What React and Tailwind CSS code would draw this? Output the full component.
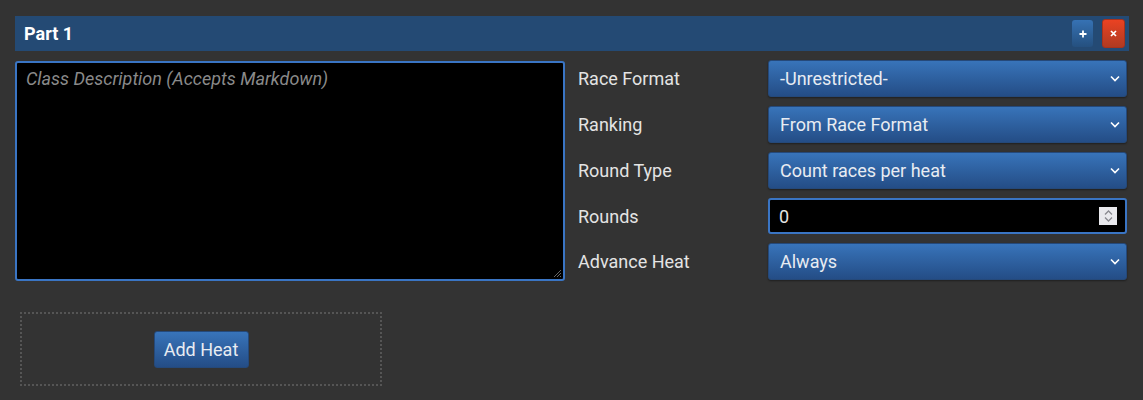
import React from 'react';

const font = { fontFamily: 'Roboto, "Liberation Sans", sans-serif' };

const Chevron = () => (
  <svg width="10" height="7" viewBox="0 0 10 7" className="shrink-0">
    <path d="M1 1.5 L5 5.5 L9 1.5" fill="none" stroke="#ffffff" strokeWidth="1.6" />
  </svg>
);

const SelectBox = ({ value }) => (
  <div className="w-[359px] h-[37px] rounded-[3px] border border-[#25497a] bg-gradient-to-b from-[#3874ba] to-[#244d86] flex items-center justify-between pl-[11px] pr-[6px] text-[18px] text-[#e8ecf2] shadow-[0_1px_2px_rgba(0,0,0,0.4)]">
    <span>{value}</span>
    <Chevron />
  </div>
);

const Row = ({ label, children }) => (
  <div className="flex items-center">
    <div className="w-[190px] text-[18px] text-[#e4e4e4]">{label}</div>
    {children}
  </div>
);

export default function App() {
  return (
    <div className="min-h-[400px] bg-[#333333] pt-4 pl-[15px] pr-[14px]" style={font}>
      {/* ヘッダー */}
      <div className="h-[35px] bg-[#244a74] flex items-center justify-between pl-[9px] pr-[4px]">
        <span className="text-white font-bold text-[18px]">Part 1</span>
        <div className="flex items-center gap-[9px]">
          <button className="w-[21px] h-[27px] rounded-[3px] bg-gradient-to-b from-[#3672b4] to-[#25507f] flex items-center justify-center">
            <svg width="8" height="8" viewBox="0 0 8 8">
              <path d="M4 0.5 V7.5 M0.5 4 H7.5" stroke="#fff" strokeWidth="1.8" />
            </svg>
          </button>
          <button className="w-[23px] h-[29px] rounded-[3px] border border-[#a8321c] bg-gradient-to-b from-[#ea4222] to-[#b03a22] flex items-center justify-center">
            <svg width="7" height="7" viewBox="0 0 7 7">
              <path d="M1 1 L6 6 M6 1 L1 6" stroke="#fff" strokeWidth="1.7" />
            </svg>
          </button>
        </div>
      </div>

      {/* 本体 */}
      <div className="flex mt-[9px]">
        <div className="relative w-[550px] h-[220px] mt-px bg-black border-2 border-[#3a75c4] rounded-[3px] px-[9px] py-[2px]">
          <span className="italic text-[18px] text-[#8a8a8a]">Class Description (Accepts Markdown)</span>
          <svg className="absolute right-[1px] bottom-[1px]" width="9" height="9" viewBox="0 0 9 9">
            <path d="M8 1 L1 8 M8 4 L4 8 M8 7 L7 8" stroke="#666" strokeWidth="1" />
          </svg>
        </div>

        <div className="ml-[13px] flex flex-col gap-[9px]">
          <Row label="Race Format"><SelectBox value="-Unrestricted-" /></Row>
          <Row label="Ranking"><SelectBox value="From Race Format" /></Row>
          <Row label="Round Type"><SelectBox value="Count races per heat" /></Row>
          <Row label="Rounds">
            <div className="w-[359px] h-[36px] rounded-[3px] border-2 border-[#3a75c4] bg-black flex items-center justify-between pl-[9px] pr-[8px] text-[18px] text-[#e4e4e4]">
              <span>0</span>
              <div className="w-[18px] h-[18px] bg-[#e9e9ed] flex flex-col items-center justify-center gap-[2px]">
                <svg width="9" height="5" viewBox="0 0 9 5">
                  <path d="M1 4.5 L4.5 1 L8 4.5" fill="none" stroke="#8a8a90" strokeWidth="1.3" />
                </svg>
                <svg width="9" height="5" viewBox="0 0 9 5">
                  <path d="M1 0.5 L4.5 4 L8 0.5" fill="none" stroke="#8a8a90" strokeWidth="1.3" />
                </svg>
              </div>
            </div>
          </Row>
          <Row label="Advance Heat"><SelectBox value="Always" /></Row>
        </div>
      </div>

      {/* ヒート追加 */}
      <div className="ml-[5px] mt-[31px] w-[362px] h-[74px] border-2 border-dotted border-[#555555] flex items-center justify-center">
        <button className="w-[95px] h-[37px] rounded-[3px] border border-[#25497a] bg-gradient-to-b from-[#3874ba] to-[#244d86] text-[18px] text-[#e8ecf2]">
          Add Heat
        </button>
      </div>
    </div>
  );
}
